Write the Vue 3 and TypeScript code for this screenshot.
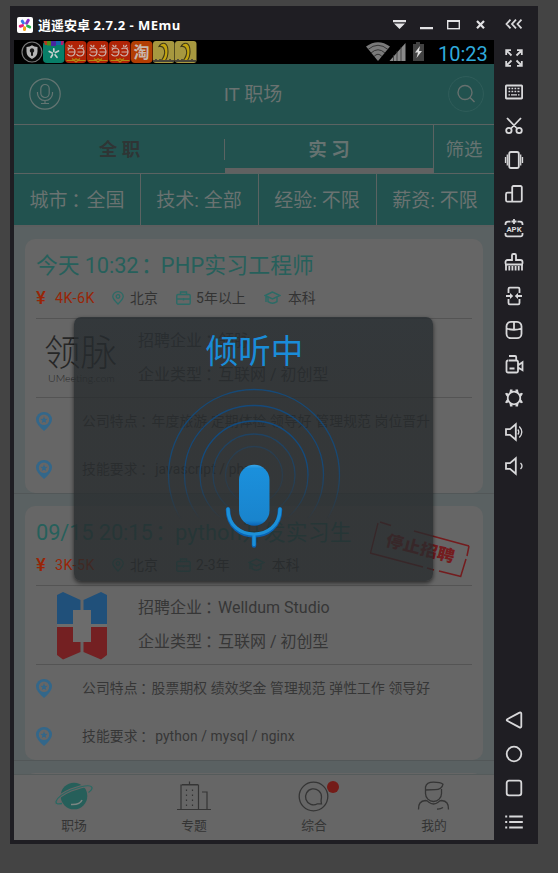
<script setup lang="ts">
interface Job {
  time: string
  title: string
  salary: string
  city: string
  years: string
  degree: string
  company: string
  kind: string
  perks: string
  skills: string
  logo: 'text' | 'mark'
  closed: boolean
}

interface Icon {
  name: string
  d: string
  fill?: string
  thin?: string
  label?: string
}

const filters: { label: string; wide: boolean; value: string }[] = [
  { label: '城市', wide: true, value: '全国' },
  { label: '技术', wide: false, value: '全部' },
  { label: '经验', wide: false, value: '不限' },
  { label: '薪资', wide: false, value: '不限' },
]

const jobs: Job[] = [
  {
    time: '今天 10:32',
    title: 'PHP实习工程师',
    salary: '4K-6K',
    city: '北京',
    years: '5年以上',
    degree: '本科',
    company: '领脉',
    kind: '互联网 / 初创型',
    perks: '年度旅游 定期体检 领导好 管理规范 岗位晋升',
    skills: 'javascript / php',
    logo: 'text',
    closed: false,
  },
  {
    time: '09/15 20:15',
    title: 'python开发实习生',
    salary: '3K-5K',
    city: '北京',
    years: '2-3年',
    degree: '本科',
    company: 'Welldum Studio',
    kind: '互联网 / 初创型',
    perks: '股票期权 绩效奖金 管理规范 弹性工作 领导好',
    skills: 'python / mysql / nginx',
    logo: 'mark',
    closed: true,
  },
]

const tools: Icon[] = [
  { name: 'collapse', d: 'M6.500 5.700 2.500 10l4 4.300M12 5.700 8 10l4 4.300M17.500 5.700 13.500 10l4 4.300' },
  {
    name: 'fullscreen',
    d: 'M2.200 7V2.200H7M2.500 2.500 7.500 7.500M13 2.200h4.800V7M17.500 2.500l-5 5M2.200 13v4.800H7M2.500 17.500l5-5M13 17.800h4.800V13M17.500 17.500l-5-5',
  },
  {
    name: 'keyboard',
    d: 'M2.500 3.500h15a.6.6 0 0 1 .6.6v11.800a.6.6 0 0 1-.6.6h-15a.6.6 0 0 1-.6-.6V4.100a.6.6 0 0 1 .6-.6z',
    thin: 'M4.500 6.500h1.700M7.500 6.500h1.700M10.500 6.500h1.700M13.500 6.500h2M4.500 9.500h1.700M7.500 9.500h1.700M10.500 9.500h1.700M13.500 9.500h2M4.500 12.800h1.500M7 12.800h6M14 12.800h1.500',
  },
  {
    name: 'scissors',
    d: 'M3 2l10 10.500M17 2 7 12.500M7.600 14.500a2.700 2.700 0 1 1-5.400 0 2.700 2.700 0 0 1 5.400 0zM17.800 14.500a2.700 2.700 0 1 1-5.400 0 2.700 2.700 0 0 1 5.400 0z',
  },
  {
    name: 'shake',
    d: 'M7 2h6a1.800 1.800 0 0 1 1.800 1.800v12.400A1.800 1.800 0 0 1 13 18H7a1.800 1.800 0 0 1-1.800-1.800V3.800A1.800 1.800 0 0 1 7 2z',
    thin: 'M3.300 4.500v11M1.500 7v6M16.700 4.500v11M18.500 7v6',
  },
  {
    name: 'rotate',
    d: 'M9.500 2h7a1.300 1.300 0 0 1 1.300 1.300v13a1.300 1.300 0 0 1-1.300 1.300h-13A1.500 1.500 0 0 1 2 16.200v-6A1.500 1.500 0 0 1 3.500 8.700H8.200V3.300A1.300 1.300 0 0 1 9.500 2zM8.200 8.700v8.700',
  },
  {
    name: 'apk',
    d: 'M6.500 3.600H4A2.500 2.500 0 0 0 1.500 6v1M13.500 3.600H16A2.500 2.500 0 0 1 18.500 6v1M1.500 15v1.500A1.800 1.800 0 0 0 3.300 18.300h13.400a1.800 1.800 0 0 0 1.800-1.800V15M10 1v5M7.500 3.500h5',
    label: 'APK',
  },
  {
    name: 'clean',
    d: 'M1.500 11.800V10a2 2 0 0 1 2-2H8V3.300c0-.8.500-1.300 1.300-1.300h1.400c.8 0 1.300.5 1.300 1.300V8h4.500a2 2 0 0 1 2 2v1.800M1 12.500h18M2 12v6.500M5.300 14v4.500M8.400 14v4.500M11.600 14v4.500M14.700 14v4.500M18 12v6.500',
  },
  {
    name: 'split',
    d: 'M4.500 7V3A1.300 1.300 0 0 1 5.800 1.700h8.400A1.300 1.300 0 0 1 15.500 3v4M4.500 13v4a1.300 1.300 0 0 0 1.300 1.300h8.400a1.300 1.300 0 0 0 1.300-1.300v-4M2 10h6M12 10h6',
    fill: 'M6 7l3.200 3L6 13zM14 7l-3.200 3L14 13z',
  },
  {
    name: 'mouse',
    d: 'M7 1.800h6a4.500 4.500 0 0 1 4.500 4.500v7.400A4.500 4.500 0 0 1 13 18.200H7a4.500 4.500 0 0 1-4.500-4.500V6.300A4.500 4.500 0 0 1 7 1.800zM2.500 8.500q7.500 2.500 15 0M10 2v7.500',
  },
  {
    name: 'record',
    d: 'M4.500 6.500h8a1.500 1.500 0 0 1 1.500 1.500v9a1.500 1.500 0 0 1-1.500 1.500H4A1.500 1.500 0 0 1 2.500 17V8A1.500 1.500 0 0 1 4 6.500M5 2h6a1.200 1.200 0 0 1 1.200 1.200v3M5.500 14.500h5M14.500 11l4-2.800v8l-4-2.400',
  },
  {
    name: 'settings',
    d: 'M3.700 10a6.300 6.300 0 1 0 12.600 0 6.300 6.300 0 1 0-12.600 0z',
    fill: 'M6 1.500h2.500v3L5.500 5zM14 1.500h-2.500v3L14.500 5zM6 18.500h2.500v-3L5.500 15zM14 18.500h-2.500v-3l3-.5zM1 5.500 3 4.800 5 6.500 3.800 9.500 2.500 8zM19 5.500 17 4.800 15 6.500l1.200 3L17.500 8zM1 14.500l2 .7 2-1.700-1.200-3L2.500 12zM19 14.500l-2 .7-2-1.700 1.200-3 1.300 1.500z',
  },
  {
    name: 'volume-up',
    d: 'M2 7.200h4L11.800 2.300v15.400L6 12.800H2z',
    thin: 'M13.800 7.500q2 2.500 0 5M15.300 4.500q5 5.500 0 11',
  },
  {
    name: 'volume-down',
    d: 'M2 7.200h4L11.800 2.300v15.400L6 12.800H2z',
    thin: 'M16.500 7q3 3 0 6',
  },
]

const keys: Icon[] = [
  { name: 'back', d: 'M3.200 9.200 15.500 2.600a1.200 1.200 0 0 1 1.800 1v12.800a1.200 1.200 0 0 1-1.800 1L3.200 10.800a.9.9 0 0 1 0-1.600z' },
  { name: 'home', d: 'M2.700 10a7.300 7.300 0 1 0 14.600 0 7.300 7.300 0 1 0-14.600 0z' },
  { name: 'recent', d: 'M5 2.700h10A2.300 2.300 0 0 1 17.300 5v10a2.300 2.300 0 0 1-2.300 2.300H5A2.300 2.300 0 0 1 2.700 15V5A2.300 2.300 0 0 1 5 2.700z' },
  { name: 'menu', d: 'M1.200 4.500h2M5.200 4.500h13.600M1.200 10h2M5.200 10h13.600M1.200 15.500h2M5.200 15.500h13.600' },
]

const rings: { r: number; o: number }[] = [
  { r: 85.5, o: 0.85 },
  { r: 69.5, o: 0.9 },
  { r: 54, o: 1 },
  { r: 41, o: 0.6 },
  { r: 28.5, o: 0.35 },
]
</script>

<template>
  <div class="desktop">
    <div class="window">
      <div class="main">
        <div class="titlebar">
          <svg class="app-icon" viewBox="0 0 16 16">
            <rect width="16" height="16" rx="2" fill="#fff" />
            <g fill="none" stroke-width="3" stroke-linecap="round">
              <path d="M9.600 6.200 11.300 3.200" stroke="#8a35c9" />
              <path d="M6.400 6 5.200 4.200" stroke="#3a78e8" />
              <path d="M5.500 8.600 3.200 9.200" stroke="#e8207c" />
              <path d="M7.600 10.800 7.500 12.600" stroke="#f5a31c" />
              <path d="M10.600 9 12.700 10" stroke="#25b34b" />
            </g>
          </svg>
          <span class="app-title">逍遥安卓 <span class="version">2.7.2 - MEmu</span></span>
          <svg class="controls" viewBox="0 0 94 14">
            <g fill="#e2e2e4">
              <path d="M0 2h13v2.200H0zM1 5.500h11L6.500 11zM27 9h13v2.200H27z" />
            </g>
            <g fill="none" stroke="#e2e2e4">
              <rect x="54.700" y="2.700" width="11.600" height="8" stroke-width="1.400" />
              <path d="M54 3h13" stroke-width="2" />
              <path d="M84 3l7 7.200M91 3l-7 7.200" stroke-width="2.200" />
            </g>
          </svg>
        </div>

        <div class="phone">
          <div class="status">
            <svg class="notes" viewBox="0 0 176 22">
              <circle cx="11" cy="11" r="10" fill="#080808" stroke="#777" stroke-width="1.200" />
              <path d="M5.500 6q3.500-.2 5.500-1.700Q13 5.800 16.500 6v4.500q0 5-5.500 7.500-5.500-2.500-5.500-7.500z" fill="#b5b5b5" />
              <path d="M11 7.200a2.400 2.400 0 0 1 1 4.500v3h-2v-3a2.400 2.400 0 0 1 1-4.500z" fill="#161616" />
              <rect x="22" width="21.500" height="22" rx="4" fill="#087e68" />
              <path d="M22.500 0h6v4h-4.500z" fill="#b43a20" />
              <path d="M26 0h4v4.500h-4z" fill="#4c8d18" />
              <path d="M30 0h5v5h-5z" fill="#4a26a0" />
              <path d="M35 0h5v4h-5z" fill="#1565a8" />
              <path d="M40 0h3l-1 4h-2z" fill="#b01d70" />
              <path d="M32.800 10.500V7.800M31.200 12l-3-1.500M31.500 13.800l-1.500 2.500M34 13.800l2 2.500M34.500 11.500l3-1.500" stroke="#c8d0ce" stroke-width="1.700" stroke-linecap="round" />
              <g v-for="n in 3" :key="n" :transform="`translate(${22 + n * 22} 0)`">
                <rect width="21.500" height="22" rx="4" fill="#b02306" />
                <path
                  d="M2.500 6.800 4.500 7.500M3.500 4 5.500 6M7 3.800 6.500 6M3 9.500Q3.500 7 6.500 7 10 7.500 10 11 9.500 15 6 15 3.500 15 2.500 13M3.500 11h6M19 6.800 17 7.500M18 4 16 6M14.500 3.800 15 6M12.500 8Q13.500 7 15.500 7 19 7.500 19 11 18.500 15 15 15 12.500 15 11.500 13M12.500 11h6"
                  fill="none"
                  stroke="#cdb3ac"
                  stroke-width="1.200"
                />
                <path d="M1.500 19.500h7l2.500-1.800 2.500 1.800h7M7 17.500l4 3.500 4-3.500" fill="none" stroke="#b28b12" stroke-width="1.200" />
              </g>
              <rect x="110" width="21.500" height="22" rx="4" fill="#b33e03" />
              <text x="112.500" y="16.500" class="tao">淘</text>
              <g v-for="n in 2" :key="n" :transform="`translate(${110 + n * 22} 0)`">
                <rect width="21.500" height="22" rx="3" fill="#a7983f" />
                <path d="M6 5.500q2-4 6-3 3 1.500 3 8 0 6-3 9.500H8q4.500-6 3.500-10.500Q10.500 4.500 6 5.500z" fill="#c2a40e" stroke="#403a18" stroke-width="1.100" />
                <path d="M0 20h21M3 18v3M7 18v3M17 18v3" stroke="#4a463a" stroke-width="1.800" />
              </g>
            </svg>
            <span class="grow"></span>
            <svg class="signals" viewBox="0 0 60 20">
              <path d="M12 19 0 4.500Q12-4 24 4.500z" fill="#7a7a7a" />
              <path d="M2 7.500Q12-1 22 7.500M5 11Q12 4.500 19 11M8 14.500Q12 10 16 14.500" fill="none" stroke="#2c2c2c" stroke-width=".9" />
              <path d="M23.500 19 39.500 1v18z" fill="#8a8a8a" />
              <path d="M27.500 13v6M31 9v10M35 5v14" stroke="#333" stroke-width=".8" />
              <path d="M50 0h4v2h4v17H47V2h3z" fill="#424242" />
              <path d="M54 4l-5 6.500h3L50.500 16l5.500-7h-3z" fill="#ddd" />
            </svg>
            <span class="clock">10:23</span>
          </div>

          <header class="appbar">
            <svg class="voice" viewBox="0 0 32 32" fill="none" stroke="#647572" stroke-width="1.200">
              <circle cx="16" cy="16" r="15.200" />
              <rect x="11.800" y="6.500" width="8.400" height="13" rx="4.200" />
              <path d="M8.500 14v1.500a7.500 7 0 0 0 15 0V14M16 22.500V25M12 25.500h8" />
            </svg>
            <span class="heading">IT 职场</span>
            <svg class="search" viewBox="0 0 36 36" fill="none">
              <circle cx="18" cy="18" r="17.400" stroke="#305d5a" />
              <g stroke="#66706e" stroke-width="1.400">
                <circle cx="17" cy="16.500" r="7" />
                <path d="M22 21.500l4.500 4.500" />
              </g>
            </svg>
          </header>

          <nav class="tabs">
            <div class="tab first">全 职</div>
            <div class="tab active">实 习</div>
            <div class="tab more">筛选</div>
          </nav>

          <div class="filters">
            <div v-for="f in filters" :key="f.label" class="filter">
              {{ f.label }}<span v-if="f.wide" class="colon">：</span><template v-else>:&nbsp;</template>{{ f.value }}
            </div>
          </div>

          <main class="list">
            <div v-for="job in jobs" :key="job.title" class="slot">
              <article class="card">
                <h2 class="title">
                  <span class="time">{{ job.time }}</span><span class="colon">：</span><span class="role">{{ job.title }}</span>
                </h2>
                <div class="meta">
                  <span class="yen">¥</span>
                  <span class="salary">{{ job.salary }}</span>
                  <svg class="pin" viewBox="0 0 12 14" fill="none" stroke="#2b6b66" stroke-width="1.300">
                    <path d="M6 13Q.8 8 .8 5.500a5.200 4.800 0 0 1 10.400 0Q11.200 8 6 13z" />
                    <circle cx="6" cy="5.500" r="1.800" />
                  </svg>
                  <span class="city">{{ job.city }}</span>
                  <svg class="case" viewBox="0 0 15 14" fill="none" stroke="#2b6b66" stroke-width="1.400">
                    <rect x=".8" y="3.500" width="13.400" height="9.700" rx="1.200" />
                    <path d="M4.500 3V1h6v2M1 8h13M7.500 7v2.500" />
                  </svg>
                  <span class="years">{{ job.years }}</span>
                  <svg class="cap" viewBox="0 0 17 14" fill="none" stroke="#2b6b66" stroke-width="1.400">
                    <path d="M8.500 1 1 4.500 8.500 8 16 4.500zM4 6.500v4.200q4.500 3 9 0V6.500M2 5v6" />
                  </svg>
                  <span>{{ job.degree }}</span>
                </div>

                <div class="company">
                  <div class="logo">
                    <div v-if="job.logo === 'text'" class="wordmark">
                      <span class="word">领脉</span>
                      <span class="site">UMeeting.com</span>
                    </div>
                    <svg v-else class="mark" viewBox="0 0 50 68">
                      <g fill="#20507a">
                        <path d="M0 3 6 0 23.500 8v10H16v14H0z" />
                        <path d="M50 3 44 0 26.500 8v10H34v14h16z" />
                      </g>
                      <g fill="#742022">
                        <path d="M0 35h16v15h7.500v10L6 67.500 0 63z" />
                        <path d="M50 35H34v15h-7.500v10L44 67.500l6-4.500z" />
                      </g>
                      <path d="M16 18h18v32H16zM0 32h16v3H0zM34 32h16v3H34z" fill="#6c6c6c" />
                    </svg>
                  </div>
                  <div class="facts">
                    <div>招聘企业<span class="colon">：</span>{{ job.company }}</div>
                    <div>企业类型<span class="colon">：</span>{{ job.kind }}</div>
                  </div>
                </div>

                <div class="features">
                  <div v-for="(text, i) in [job.perks, job.skills]" :key="i" class="feature">
                    <svg class="badge" viewBox="0 0 16 19">
                      <path d="M8 19Q0 12 0 7.500a8 7.500 0 0 1 16 0Q16 12 8 19z" fill="#33678a" />
                      <circle cx="8" cy="7.800" r="5.200" fill="#666" />
                      <path d="M8 4.300l1 2.400 2.500.2-1.900 1.700.6 2.500L8 9.800l-2.200 1.300.6-2.500-1.900-1.700 2.500-.2z" fill="#33678a" />
                    </svg>
                    <span>{{ i ? '技能要求' : '公司特点' }}<span class="colon">：</span><template v-if="i">&nbsp;</template>{{ text }}</span>
                  </div>
                </div>

                <svg v-if="job.closed" class="stamp" viewBox="0 0 104 58">
                  <g fill="none" stroke="#741c1e">
                    <path d="M11 -1 22 2.500M45 8l55 15" stroke-width="1.600" />
                    <path d="M9 0 1.500 30" stroke-width="1.300" />
                    <path d="M1 30l53 14M58 45l7 2M70 48l22 5.500" stroke-width="1.600" />
                    <path d="M100 23l-2 10M97 36 91.500 54" stroke-width="1.500" />
                  </g>
                  <text transform="translate(16 22.500) rotate(14)" textLength="70" lengthAdjust="spacingAndGlyphs">停止招聘</text>
                </svg>
              </article>
            </div>
            <div class="slot"><article class="card next"></article></div>
          </main>

          <footer class="bottom">
            <div class="item">
              <svg class="nav-icon" viewBox="0 0 40 32" fill="none">
                <circle cx="20" cy="16" r="13.300" fill="#265f5a" />
                <path d="M8 23.500Q1.500 25 2 21.500 4 15.500 17 10 36 3 38 7.500q.5 2-3.500 5" stroke="#666" stroke-width="3.200" />
                <path d="M8 23.500Q1.500 25 2 21.500 4 15.500 17 10 36 3 38 7.500q.5 2-3.500 5" stroke="#2a6963" stroke-width="1.300" />
                <path d="M17 24.500q9 .5 11-4.500" stroke="#7b8582" stroke-width="1.500" />
              </svg>
              <span>职场</span>
            </div>
            <div class="item">
              <svg class="nav-icon" viewBox="0 0 40 32" fill="none" stroke="#353535" stroke-width="1.200">
                <path d="M3 29.500h34M7 29.500V5h17.500v24.500M8 4.500h16M15.500 1.500V4M28 12h5v17.500" />
                <path d="M12.500 9.500v17M18.500 9.500v17" stroke-dasharray="1.500 3.500" />
              </svg>
              <span>专题</span>
            </div>
            <div class="item">
              <svg class="nav-icon" viewBox="0 0 40 32" fill="none" stroke="#353535" stroke-width="1.300">
                <circle cx="19.500" cy="16.500" r="14.300" />
                <path d="M27.500 17a8 8 0 1 0-4 6.800h4q-.8-3 0-6.800z" />
                <circle cx="39" cy="7" r="6" fill="#741c18" stroke="none" />
              </svg>
              <span>综合</span>
            </div>
            <div class="item">
              <svg class="nav-icon" viewBox="0 0 40 32" fill="none" stroke="#353535" stroke-width="1.300">
                <path d="M11.500 8v5.500a8 8 0 0 0 16 0V9M11.500 10V7q1-4.800 8-4.800 7 0 9.500 2-1 5.500-8 5.500zM4.500 29.500q-.5-8.500 7-9 2 0 3 1.500 5 4 10 0 1-1.500 3-1.500 7.500.5 7 9M23 29q3 .3 6-1.500" />
              </svg>
              <span>我的</span>
            </div>
          </footer>

          <div class="listening">
            <div class="prompt">倾听中</div>
            <svg class="mic" viewBox="0 0 180 164">
              <defs>
                <linearGradient id="fade" x1="0" y1="0" x2="0" y2="164" gradientUnits="userSpaceOnUse">
                  <stop offset="0" stop-color="#fff" />
                  <stop offset=".5" stop-color="#fff" stop-opacity=".9" />
                  <stop offset=".82" stop-color="#fff" stop-opacity="0" />
                </linearGradient>
                <mask id="ring-mask" maskUnits="userSpaceOnUse" x="0" y="0" width="180" height="164">
                  <rect width="180" height="164" fill="url(#fade)" />
                </mask>
                <linearGradient id="body" x1="0" y1="0" x2="0" y2="1">
                  <stop offset="0" stop-color="#3aa6e8" />
                  <stop offset=".06" stop-color="#1b90dc" />
                  <stop offset=".92" stop-color="#1984cd" />
                  <stop offset="1" stop-color="#0a62b4" />
                </linearGradient>
              </defs>
              <g mask="url(#ring-mask)" fill="none" stroke="#114d84" stroke-width="1.300">
                <circle v-for="ring in rings" :key="ring.r" cx="90" cy="90" :r="ring.r" :stroke-opacity="ring.o" />
              </g>
              <rect x="75" y="79.700" width="30.500" height="61" rx="15.200" fill="url(#body)" />
              <path d="M64 124.500C64 159 116 159 116 124.500M90 151.500v9" fill="none" stroke="#0b62b2" stroke-width="4.500" stroke-linecap="round" />
              <path d="M64 124C64 157.500 116 157.500 116 124M90 150.500v9" fill="none" stroke="#1c90d8" stroke-width="3.300" stroke-linecap="round" />
            </svg>
          </div>
        </div>
      </div>

      <aside class="sidebar">
        <div v-for="icon in tools" :key="icon.name" class="cell">
          <svg viewBox="0 0 20 20">
            <path :d="icon.d" class="line" />
            <path v-if="icon.thin" :d="icon.thin" class="line thin" />
            <path v-if="icon.fill" :d="icon.fill" class="solid" />
            <text v-if="icon.label" x="10" y="14.300" class="apk">{{ icon.label }}</text>
          </svg>
        </div>
        <div class="grow"></div>
        <div v-for="icon in keys" :key="icon.name" class="cell">
          <svg viewBox="0 0 20 20"><path :d="icon.d" class="line" /></svg>
        </div>
      </aside>
    </div>
  </div>
</template>

<style>
body {
  background: #444;
}
</style>

<style scoped>
.desktop {
  box-sizing: border-box;
  width: 558px;
  height: 873px;
  padding: 6px 20px 29px 10px;
  background: #444;
  overflow: hidden;
  font-family: Roboto, 'Noto Sans CJK SC', sans-serif;
}
.desktop svg {
  display: block;
  flex: none;
}
.window {
  display: flex;
  height: 838px;
  background: #1f1e23;
}
.main {
  width: 480px;
  padding-left: 4px;
}
.grow {
  flex: 1;
}
.titlebar {
  display: flex;
  align-items: center;
  height: 34px;
  padding: 3px 7px 0 3px;
  box-sizing: border-box;
}
.app-icon {
  width: 16px;
  height: 16px;
}
.app-title {
  flex: 1;
  margin-left: 5px;
  color: #fff;
  font: 700 13px/20px 'Open Sans', 'Noto Sans CJK SC', sans-serif;
  white-space: nowrap;
}
.version {
  letter-spacing: 0.5px;
}
.controls {
  width: 94px;
  height: 14px;
}
.phone {
  position: relative;
  display: flex;
  flex-direction: column;
  width: 480px;
  height: 800px;
  overflow: hidden;
  background: #5a6162;
}
.status {
  display: flex;
  align-items: center;
  height: 24px;
  padding: 0 7px;
  background: #000;
  flex: none;
}
.notes {
  width: 176px;
  height: 22px;
  overflow: visible;
}
.tao {
  fill: #c8b7ad;
  font: 700 16px 'Noto Sans CJK SC', sans-serif;
}
.signals {
  width: 60px;
  height: 20px;
  margin-right: 12px;
}
.clock {
  width: 49px;
  color: #2faadb;
  font-size: 20px;
  line-height: 24px;
  padding-top: 4px;
}
.appbar {
  display: flex;
  align-items: center;
  justify-content: space-between;
  flex: none;
  height: 60px;
  padding: 0 10px 0 15px;
  background: #22524f;
  box-sizing: border-box;
}
.voice {
  width: 32px;
  height: 32px;
}
.heading {
  padding: 0 3px 3px 0;
  color: #6a7271;
  font-size: 19px;
}
.search {
  width: 36px;
  height: 36px;
}
.tabs {
  display: flex;
  flex: none;
  height: 50px;
  box-sizing: border-box;
  border-top: 1px solid #5b6362;
  border-bottom: 1px solid #5b6362;
  background: #22524f;
}
.tab {
  box-sizing: border-box;
  line-height: 50px;
  text-align: center;
  color: #667371;
  font-size: 18.5px;
}
.first {
  position: relative;
  width: 211px;
  font-weight: 700;
  color: #2f3535;
}
.first::after {
  content: '';
  position: absolute;
  right: 0;
  top: 14px;
  width: 1px;
  height: 21px;
  background: #5b6362;
}
.active {
  width: 208px;
  font-weight: 700;
  border-bottom: 5px solid #606161;
}
.more {
  width: 61px;
  border-left: 1px solid #5b6362;
}
.filters {
  display: flex;
  flex: none;
  height: 53px;
  box-sizing: border-box;
  border-bottom: 2px solid #5c5e5f;
  background: #22524f;
}
.filter {
  width: 118px;
  box-sizing: border-box;
  padding-right: 1px;
  border-right: 1px solid #5b6362;
  line-height: 54px;
  height: 51px;
  text-align: center;
  white-space: nowrap;
  color: #6a7271;
  font-size: 19px;
}
.filter:first-child {
  width: 127px;
  padding-right: 0;
}
.filter:last-child {
  width: 117px;
  border-right: 0;
}
.colon {
  display: inline-block;
  margin-right: 1px;
  font-family: 'Noto Sans CJK TC', sans-serif;
  line-height: 1;
  vertical-align: -1px;
  text-indent: -1px;
}
.list {
  flex: 1;
  min-height: 0;
  overflow: hidden;
}
.slot {
  height: 267px;
  box-sizing: border-box;
  padding: 12px 11px 0;
  border-bottom: 1px solid #525758;
}
.card {
  position: relative;
  box-sizing: border-box;
  height: 254px;
  padding: 9px 11px 0;
  border-radius: 10px;
  background: #666;
  color: #363636;
}
.title {
  margin: 0;
  height: 34px;
  line-height: 36px;
  font-size: 21.8px;
  font-weight: 400;
  color: #26605b;
  white-space: nowrap;
}
.title .colon {
  margin-right: 3.5px;
  text-indent: -3px;
}
.time {
  letter-spacing: -0.1px;
}
.role {
  letter-spacing: 0.15px;
}
.meta {
  display: flex;
  align-items: center;
  height: 31px;
  padding-bottom: 5px;
  font-size: 13.9px;
  line-height: 28px;
  letter-spacing: 0.1px;
  color: #333;
}
.yen {
  width: 19px;
  font-size: 18.5px;
  font-weight: 500;
  color: #982507;
}
.salary {
  width: 57px;
  font-size: 14.3px;
  letter-spacing: 0.5px;
  color: #982507;
}
.pin {
  width: 12px;
  height: 14px;
  margin-right: 6px;
}
.city {
  margin-right: 18px;
}
.case {
  width: 15px;
  height: 14px;
  margin-right: 5px;
}
.years {
  margin-right: 18px;
}
.cap {
  width: 17px;
  height: 14px;
  margin-right: 7px;
}
.company {
  display: flex;
  height: 78px;
  border-top: 1px solid #545454;
}
.logo {
  width: 102px;
  flex: none;
}
.wordmark {
  display: flex;
  flex-direction: column;
  padding: 15px 0 0 8px;
  color: #262626;
}
.word {
  height: 38px;
  font-size: 36.5px;
  font-weight: 300;
  line-height: 40px;
}
.site {
  padding-left: 4px;
  font: 300 10.5px/13px Lato, sans-serif;
}
.mark {
  width: 50px;
  height: 68px;
  margin: 6px 0 0 21px;
}
.facts {
  padding-top: 5px;
  font-size: 16px;
  line-height: 34px;
  white-space: nowrap;
}
.features {
  border-top: 1px solid #545454;
}
.feature {
  display: flex;
  align-items: center;
  height: 48px;
  font-size: 13.8px;
  line-height: 20px;
  letter-spacing: 0.12px;
  white-space: nowrap;
}
.feature > span {
  padding-bottom: 2px;
}
.badge {
  width: 16px;
  height: 19px;
  margin: 0 30px 1px 0;
}
.stamp {
  position: absolute;
  left: 344px;
  top: 17px;
  width: 104px;
  height: 58px;
  overflow: visible;
  fill: #741c1e;
  font-size: 16px;
  font-weight: 900;
}
.bottom {
  display: flex;
  flex: none;
  height: 66px;
  box-sizing: border-box;
  border-top: 1px solid #555b5b;
  background: #666;
}
.item {
  display: flex;
  flex-direction: column;
  align-items: center;
  width: 120px;
  padding-top: 5px;
  color: #343434;
  font-size: 12.8px;
  line-height: 18px;
}
.nav-icon {
  width: 40px;
  height: 32px;
  margin-bottom: 5px;
  overflow: visible;
}
.listening {
  position: absolute;
  left: 60px;
  top: 277px;
  display: flex;
  flex-direction: column;
  align-items: center;
  width: 359px;
  height: 264px;
  border-radius: 7px;
  background: linear-gradient(rgba(37, 43, 47, 0.78), rgba(38, 42, 44, 0.78) 30%);
  box-shadow: 0 2px 4px rgba(0, 0, 0, 0.6);
}
.prompt {
  height: 68px;
  padding-left: 2px;
  line-height: 70px;
  color: #1a8cd8;
  font-size: 32.5px;
}
.mic {
  width: 180px;
  height: 164px;
}
.sidebar {
  display: flex;
  flex-direction: column;
  align-items: center;
  width: 40px;
  padding: 1px 0 5px;
}
.cell {
  display: flex;
  align-items: center;
  justify-content: center;
  height: 34px;
}
.cell svg {
  width: 20px;
  height: 20px;
}
.line {
  fill: none;
  stroke: #d8d8da;
  stroke-width: 1.8;
}
.thin {
  stroke-width: 1.3;
}
.solid {
  fill: #d8d8da;
}
.apk {
  fill: #d8d8da;
  font: 700 7.8px Roboto, sans-serif;
  text-anchor: middle;
}
</style>
